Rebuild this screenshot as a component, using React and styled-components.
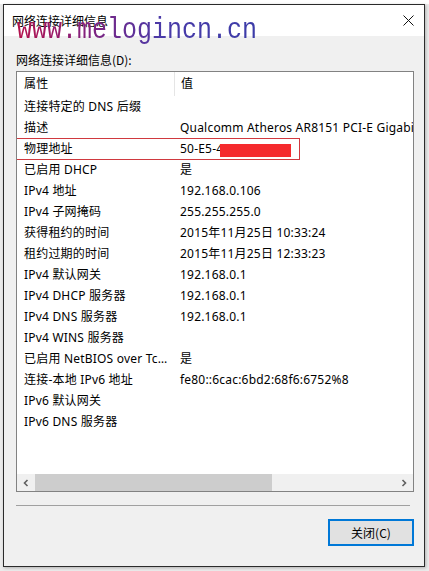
import React from "react"
import styled, { createGlobalStyle } from "styled-components"

const GlobalStyle = createGlobalStyle`
  html, body {
    margin: 0;
    padding: 0;
    background: #ebebeb;
  }
  body {
    font-family: "Segoe UI", "Noto Sans", "Noto Sans CJK SC", sans-serif;
    font-size: 12px;
    color: #000;
  }
`

const Page = styled.div`
  width: 429px;
  height: 571px;
  padding: 4px 0 0 3px;
  box-sizing: border-box;
  background: linear-gradient(#ffffff 0 4px, #ebebeb 4px);
`

const Window = styled.div`
  position: relative;
  width: 422px;
  height: 563px;
  box-sizing: border-box;
  border: 1px solid #2b2b2b;
  background: #f0f0f0;
  display: flex;
  flex-direction: column;
  box-shadow: 1px 1px 3px rgba(0, 0, 0, 0.25);
`

const TitleBar = styled.div`
  height: 31px;
  background: #fff;
  display: flex;
  align-items: center;
  justify-content: space-between;
  padding: 0 10px 0 8px;
  font-family: "Noto Sans CJK SC", sans-serif;
  font-size: 12px;
`

const Watermark = styled.div`
  position: absolute;
  left: 13px;
  top: 8px;
  font-family: "Liberation Mono", monospace;
  font-size: 25px;
  line-height: 30px;
  transform: scaleY(1.2);
  transform-origin: top left;
  background: linear-gradient(90deg, #b4124c 0%, #8a1f78 25%, #4a3aa8 60%, #3c3ca8 100%);
  -webkit-background-clip: text;
  background-clip: text;
  color: transparent;
  pointer-events: none;
`

const Body = styled.div`
  flex: 1;
  display: flex;
  flex-direction: column;
  padding: 14px 10px 0 12px;
`

const Caption = styled.div`
  height: 21px;
  line-height: 20px;
  font-family: "Noto Sans CJK SC", sans-serif;
`

const ListBox = styled.div`
  height: 421px;
  box-sizing: border-box;
  border: 1px solid #828282;
  background: #fff;
  display: flex;
  flex-direction: column;
  overflow: hidden;
`

const Rows = styled.div`
  flex: 1;
`

const Row = styled.div`
  position: relative;
  display: grid;
  grid-template-columns: 157px 1fr;
  height: ${p => (p.$head ? 24 : 21)}px;
  align-items: center;
  white-space: nowrap;
  letter-spacing: 0.2px;
`

const Cell = styled.div`
  padding: 0 ${p => (p.$value ? 0 : 6)}px 0 ${p => (p.$value ? 6 : 7)}px;
  overflow: hidden;
  text-overflow: ${p => (p.$value ? "clip" : "ellipsis")};
  height: 100%;
  line-height: ${p => (p.$head ? 24 : 21)}px;
  border-left: ${p => (p.$head && p.$value ? "1px solid #e5e5e5" : "none")};
  box-sizing: border-box;
`

const Highlight = styled.div`
  position: absolute;
  left: -1px;
  top: 0;
  width: 284px;
  height: 22px;
  box-sizing: border-box;
  border: 1px solid #d0393f;
  pointer-events: none;
`

const Redact = styled.span`
  position: absolute;
  left: 203px;
  top: 5px;
  width: 71px;
  height: 13px;
  background: #f52a2e;
`

const ScrollBar = styled.div`
  height: 17px;
  display: flex;
  align-items: stretch;
  background: #f0f0f0;
`

const Arrow = styled.div`
  width: 18px;
  display: flex;
  align-items: center;
  justify-content: center;
`

const Track = styled.div`
  flex: 1;
  display: flex;
`

const Thumb = styled.div`
  width: 237px;
  background: #cdcdcd;
`

const Separator = styled.div`
  height: 1px;
  background: #a0a0a0;
  margin: 13px 4px 0 0;
`

const Footer = styled.div`
  display: flex;
  justify-content: flex-end;
  padding-top: 13px;
`

const Button = styled.button`
  width: 86px;
  height: 27px;
  box-sizing: border-box;
  border: 2px solid #0078d7;
  background: #e1e1e1;
  font-family: "Noto Sans CJK SC", sans-serif;
  font-size: 12px;
  color: #000;
  padding: 0;
`

const rows = [
  ["连接特定的 DNS 后缀", ""],
  ["描述", "Qualcomm Atheros AR8151 PCI-E Gigabit Ethernet Controller (NDIS 6.30)"],
  ["物理地址", "50-E5-4", true],
  ["已启用 DHCP", "是"],
  ["IPv4 地址", "192.168.0.106"],
  ["IPv4 子网掩码", "255.255.255.0"],
  ["获得租约的时间", "2015年11月25日 10:33:24"],
  ["租约过期的时间", "2015年11月25日 12:33:23"],
  ["IPv4 默认网关", "192.168.0.1"],
  ["IPv4 DHCP 服务器", "192.168.0.1"],
  ["IPv4 DNS 服务器", "192.168.0.1"],
  ["IPv4 WINS 服务器", ""],
  ["已启用 NetBIOS over Tcpip", "是"],
  ["连接-本地 IPv6 地址", "fe80::6cac:6bd2:68f6:6752%8"],
  ["IPv6 默认网关", ""],
  ["IPv6 DNS 服务器", ""],
]

const Chevron = ({ right }) => (
  <svg width="8" height="8" viewBox="0 0 8 8">
    <path
      d={right ? "M2.5 1 L5.5 4 L2.5 7" : "M5.5 1 L2.5 4 L5.5 7"}
      fill="none"
      stroke="#606060"
      strokeWidth="1.6"
    />
  </svg>
)

const CloseIcon = () => (
  <svg width="11" height="11" viewBox="0 0 11 11">
    <path d="M0.5 0.5 L10.5 10.5 M10.5 0.5 L0.5 10.5" stroke="#111" strokeWidth="1" />
  </svg>
)

export default function App() {
  return (
    <Page>
      <GlobalStyle />
      <Window>
        <TitleBar>
          <span>网络连接详细信息</span>
          <CloseIcon />
        </TitleBar>
        <Watermark>www.melogincn.cn</Watermark>
        <Body>
          <Caption>网络连接详细信息(D):</Caption>
          <ListBox>
            <Rows>
              <Row $head>
                <Cell $head>属性</Cell>
                <Cell $head $value>值</Cell>
              </Row>
              {rows.map(([name, value, marked]) => (
                <Row key={name}>
                  <Cell>{name}</Cell>
                  <Cell $value>{value}</Cell>
                  {marked && (
                    <Highlight>
                      <Redact />
                    </Highlight>
                  )}
                </Row>
              ))}
            </Rows>
            <ScrollBar>
              <Arrow><Chevron /></Arrow>
              <Track><Thumb /></Track>
              <Arrow><Chevron right /></Arrow>
            </ScrollBar>
          </ListBox>
          <Separator />
          <Footer>
            <Button>关闭(C)</Button>
          </Footer>
        </Body>
      </Window>
    </Page>
  )
}
